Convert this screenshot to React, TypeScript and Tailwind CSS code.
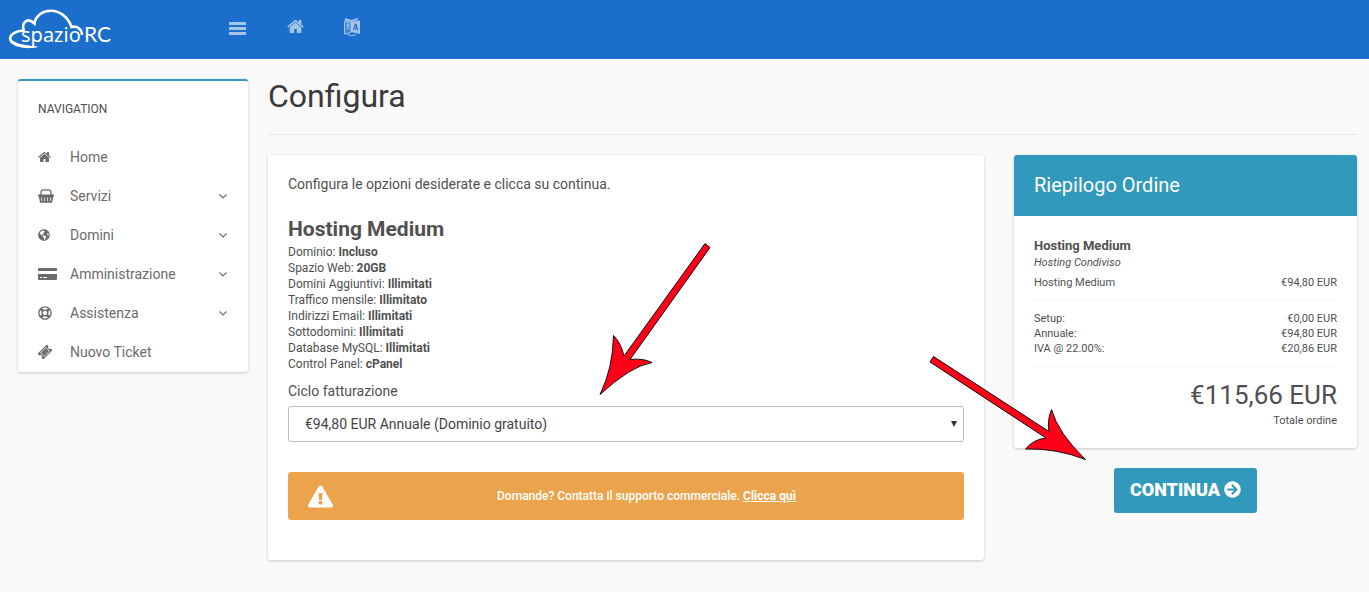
import type { ReactNode } from "react";
import {
  FaArrowCircleRight,
  FaExclamationTriangle,
  FaGlobeAmericas,
  FaRegLifeRing,
} from "react-icons/fa";

function HomeIcon({ className }: { className: string }) {
  return (
    <svg viewBox="64 253 1664 1283" className={className} fill="currentColor">
      <path d="M1472 992v480q0 26-19 45t-45 19h-384v-384h-256v384h-384q-26 0-45-19t-19-45v-480q0-1 .5-3t.5-3l575-474 575 474q1 2 1 6zm223-69l-62 74q-8 9-21 11h-3q-13 0-21-7l-692-577-692 577q-12 8-24 7-13-2-21-11l-62-74q-8-10-7-23.500t11-21.500l719-599q32-26 76-26t76 26l244 204v-195q0-14 9-23t23-9h192q14 0 23 9t9 23v408l219 182q10 8 11 21.500t-7 23.500z" />
    </svg>
  );
}

function BasketIcon() {
  return (
    <svg viewBox="0 0 16 14" className="h-[14px] w-4" fill="none" stroke="currentColor">
      <path d="M3 6V3.500Q3 .8 5.800 .8H10.200Q13 .8 13 3.500V6" strokeWidth="1.300" />
      <path fill="currentColor" stroke="none" fillRule="evenodd" d="M0 5.600h16v2h-.8L14 13.800H2L.8 7.600H0zM3.100 8.600l.4 3.400h.7l-.3-3.400zM6.100 8.600v3.400h.8v-3.400zM9.100 8.600v3.400h.8v-3.400zM12.100 8.600l-.3 3.400h.7l.4-3.400z" />
    </svg>
  );
}

function CardIcon() {
  return (
    <svg viewBox="0 0 19 12" className="h-3 w-[19px]" fill="currentColor">
      <path d="M1 0h17q1 0 1 1v2H0V1q0-1 1-1z" />
      <path fillRule="evenodd" d="M0 6h19v5q0 1-1 1H1q-1 0-1-1zM2 9v1h2V9zM5 9v1h4V9z" />
    </svg>
  );
}

function TicketIcon() {
  return (
    <svg viewBox="0 0 14 14" className="h-[14px] w-[14px]">
      <g transform="rotate(-45 7 7)">
        <path
          fill="currentColor"
          fillRule="evenodd"
          d="M.5 3h13v2.500a1.500 1.500 0 0 0 0 3V11H.5V8.500a1.500 1.500 0 0 0 0-3zM3 4.200v5.600h8V4.200z"
        />
        <path fill="currentColor" d="M3.600 4.800h6.800v4.400H3.600z" />
      </g>
    </svg>
  );
}

function LanguageIcon() {
  return (
    <svg viewBox="0 0 18 20" className="h-5 w-[18px]" fill="none" stroke="currentColor">
      <path fill="currentColor" fillOpacity=".25" d="M1.500 4.500 8 6v9.500L1.500 17z" />
      <path fill="currentColor" stroke="none" d="M2 1 8.500 3 15 1v2L8.500 5 2 4z" />
      <path d="M3 8.500l3.500-.5M4.500 6.500v2M6 8.500Q5 12 3 13M4 9.500l3 3" />
      <path d="M4 17.500q4.500 2.500 9 .2" />
      <path fill="currentColor" stroke="none" fillRule="evenodd" d="M8 5 17 3.500V17L8 15zM12 6.500 10 13.300h1.300l.4-1.500h1.800l.4 1.700h1.300L13.400 6.500zM12 10.600l.6-2.400.6 2.400z" />
    </svg>
  );
}

function Chevron() {
  return (
    <svg viewBox="0 0 10 6" className="ml-auto h-[6px] w-[10px]" fill="none" stroke="currentColor">
      <path d="M1.500 1.500 5 5 8.500 1.500" strokeWidth="1.100" />
    </svg>
  );
}

function Logo() {
  return (
    <svg viewBox="0 0 120 56" className="h-14 w-[120px]" role="img" aria-label="spazioRC">
      <path
        fill="none"
        stroke="#fff"
        strokeWidth="2.600"
        d="M24.500 30.500C14 30.500 9 36 10.500 40C12 44 20 46.500 30 47M24 31C21 23 27 16.500 34.500 23.500C37 7 64 5 71.500 27C77 25.500 82 29 82 35"
      />
      <path fill="#fff" d="M10 38q5 7 28 8.500-2 1.500-8 1.500-18-.5-20-10z" />
      <text x="21" y="42" fill="#fff" fontSize="20" className="font-['Noto_Sans']">spazio</text>
      <text x="84" y="42" fill="#fff" fontSize="21" className="font-['Lato']">RC</text>
    </svg>
  );
}

const menu: { label: string; icon: ReactNode; sub?: boolean }[] = [
  { label: "Home", icon: <HomeIcon className="h-[10px] w-[13px]" /> },
  { label: "Servizi", icon: <BasketIcon />, sub: true },
  { label: "Domini", icon: <FaGlobeAmericas size={12} />, sub: true },
  { label: "Amministrazione", icon: <CardIcon />, sub: true },
  { label: "Assistenza", icon: <FaRegLifeRing size={14} />, sub: true },
  { label: "Nuovo Ticket", icon: <TicketIcon /> },
];

const features = [
  ["Dominio:", "Incluso"],
  ["Spazio Web:", "20GB"],
  ["Domini Aggiuntivi:", "Illimitati"],
  ["Traffico mensile:", "Illimitato"],
  ["Indirizzi Email:", "Illimitati"],
  ["Sottodomini:", "Illimitati"],
  ["Database MySQL:", "Illimitati"],
  ["Control Panel:", "cPanel"],
];

const costs = [
  ["Setup:", "€0,00 EUR"],
  ["Annuale:", "€94,80 EUR"],
  ["IVA @ 22.00%:", "€20,86 EUR"],
];

function Sidebar() {
  return (
    <aside className="w-[230px] shrink-0 rounded-[3px] border-t-2 border-[#3199bb] bg-white pb-px shadow-[0_1px_3px_rgba(0,0,0,0.2)]">
      <h2 className="px-5 text-xs leading-[56px] text-[#4d4d4d]">NAVIGATION</h2>
      <nav>
        {menu.map((item) => (
          <a key={item.label} href="#" className="flex h-[39px] items-center px-5 text-sm text-[#6b6b6b]">
            <span className="w-8">{item.icon}</span>
            {item.label}
            {item.sub && <Chevron />}
          </a>
        ))}
      </nav>
    </aside>
  );
}

function Summary() {
  return (
    <div className="w-[343px] shrink-0">
      <section className="overflow-hidden rounded-[3px] bg-white shadow-[0_1px_3px_rgba(0,0,0,0.2)]">
        <h2 className="bg-[#3199bb] px-5 text-xl leading-[61px] text-white">Riepilogo Ordine</h2>
        <div className="p-5 text-[11px] leading-[15px]">
          <h3 className="text-[13px] leading-[19px] font-bold">Hosting Medium</h3>
          <p className="italic">Hosting Condiviso</p>
          <div className="mt-1 flex justify-between border-b border-[#f5f5f5] pt-px pb-[10px]">
            <span>Hosting Medium</span>
            <span>€94,80 EUR</span>
          </div>
          <div className="border-b border-[#f5f5f5] py-[10px]">
            {costs.map(([label, price]) => (
              <div key={label} className="flex justify-between">
                <span>{label}</span>
                <span>{price}</span>
              </div>
            ))}
          </div>
          <div className="pt-3 text-right">
            <p className="pb-[2px] text-[26px] leading-8">€115,66 EUR</p>
            <p>Totale ordine</p>
          </div>
        </div>
      </section>
      <div className="mt-5 text-center">
        <button type="button" className="inline-flex h-[45px] items-center gap-1 rounded-[3px] bg-[#3199bb] px-4 pb-[2px] text-lg font-black text-white">
          CONTINUA
          <FaArrowCircleRight size={17} />
        </button>
      </div>
    </div>
  );
}

function Arrows() {
  return (
    <svg className="pointer-events-none absolute top-0 left-0" width="1369" height="592" fill="#ff0018" stroke="#111" strokeWidth="1">
      <path d="M705 243.500 710 247.500 630 359.500Q643 358 652 362.500 631 366 600 394.500 613 368 613.500 335.500 621 343 624 356z" />
      <path d="M933.500 356.500 1049 431.500Q1047 420 1051.500 409.500 1058 433 1085.500 459.500 1056 448 1025.500 449 1034 439 1046 438L930 362z" />
    </svg>
  );
}

export default function App() {
  return (
    <div className="relative min-h-screen bg-[#f9f9f9] font-['Roboto',sans-serif] text-[#505050]">
      <header className="flex h-[59px] items-start bg-[#1b6ecb] text-[#a4c5ea]">
        <a href="#" className="w-[229px]">
          <Logo />
        </a>
        <button type="button" aria-label="Menu" className="mt-[22px]">
          <svg viewBox="0 0 17 13" className="h-[13px] w-[17px]" fill="currentColor">
            <path d="M0 0h17v3H0zM0 5h17v3H0zM0 10h17v3H0z" />
          </svg>
        </button>
        <a href="#" aria-label="Home" className="mt-5 ml-[41px]">
          <HomeIcon className="h-[13px] w-[17px]" />
        </a>
        <a href="#" aria-label="Lingua" className="mt-[17px] ml-[39px]">
          <LanguageIcon />
        </a>
      </header>
      <div className="flex items-start gap-5 py-5 pr-3 pl-[18px]">
        <Sidebar />
        <main className="min-w-0 flex-1">
          <h1 className="border-b border-[#e7e7e7] pb-5 text-[32px] leading-[35px] text-[#3a3a3a]">Configura</h1>
          <div className="mt-5 flex items-start gap-[30px]">
            <form className="min-w-0 flex-1 rounded-[3px] bg-white px-5 pt-[19px] pb-10 shadow-[0_1px_3px_rgba(0,0,0,0.2)]">
              <p className="text-sm leading-5">Configura le opzioni desiderate e clicca su continua.</p>
              <h2 className="mt-5 text-[21px] leading-[30px] font-bold">Hosting Medium</h2>
              <ul className="text-xs leading-4">
                {features.map(([name, value]) => (
                  <li key={name}>
                    {name} <b>{value}</b>
                  </li>
                ))}
              </ul>
              <label htmlFor="cycle" className="mt-[7px] block text-sm leading-6">
                Ciclo fatturazione
              </label>
              <div className="relative mt-[3px]">
                <select id="cycle" className="block h-9 w-full appearance-none rounded-[3px] border border-[#bbb] bg-white px-4 text-sm text-[#444]">
                  <option>€94,80 EUR Annuale (Dominio gratuito)</option>
                </select>
                <svg viewBox="0 0 6 6" className="pointer-events-none absolute top-[15px] right-[7px] h-[6px] w-[6px]" fill="#333">
                  <path d="M0 0h6L3 6z" />
                </svg>
              </div>
              <div className="mt-[30px] flex h-12 items-center rounded-[3px] bg-[#eba44c] px-5 text-xs font-medium text-white">
                <FaExclamationTriangle size={25} />
                <p className="flex-1 pl-4 text-center">
                  Domande? Contatta il supporto commerciale.{" "}
                  <a href="#" className="font-bold underline">
                    Clicca quì
                  </a>
                </p>
              </div>
            </form>
            <Summary />
          </div>
        </main>
      </div>
      <Arrows />
    </div>
  );
}
